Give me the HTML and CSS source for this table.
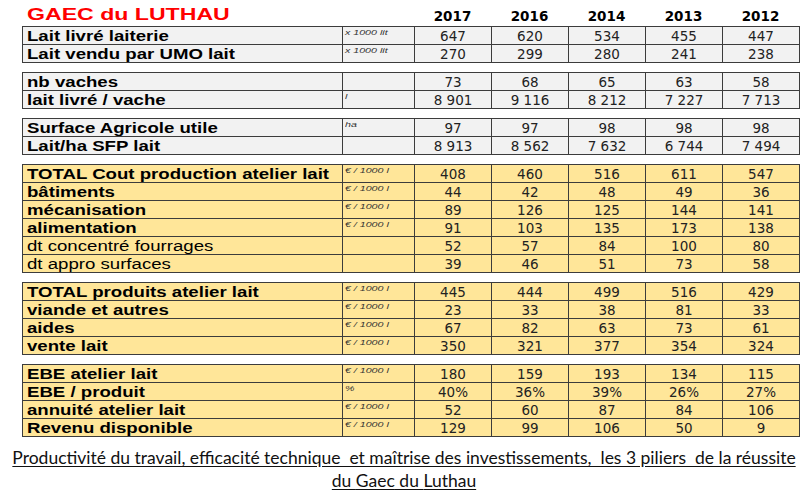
FILE: index.html
```html
<!DOCTYPE html>
<html lang="fr">
<head>
<meta charset="utf-8">
<title>GAEC du LUTHAU</title>
<link rel="stylesheet" href="styles.css">
</head>
<body>
<div class="page">
  <div class="head">
    <div class="title"><span class="sx">GAEC du LUTHAU</span></div>
    <div></div>
    <div class="yr">2017</div>
    <div class="yr">2016</div>
    <div class="yr">2014</div>
    <div class="yr">2013</div>
    <div class="yr">2012</div>
  </div>

  <table class="grp gray">
    <colgroup><col class="c-label"><col class="c-unit"><col class="c-num" span="5"></colgroup>
    <tr><th><span class="sx">Lait livré laiterie</span></th><td class="unit"><span class="sx">x 1000 lit</span></td><td>647</td><td>620</td><td>534</td><td>455</td><td>447</td></tr>
    <tr><th><span class="sx">Lait vendu par UMO lait</span></th><td class="unit"><span class="sx">x 1000 lit</span></td><td>270</td><td>299</td><td>280</td><td>241</td><td>238</td></tr>
  </table>

  <table class="grp gray">
    <colgroup><col class="c-label"><col class="c-unit"><col class="c-num" span="5"></colgroup>
    <tr><th><span class="sx">nb vaches</span></th><td class="unit"></td><td>73</td><td>68</td><td>65</td><td>63</td><td>58</td></tr>
    <tr><th><span class="sx">lait livré / vache</span></th><td class="unit"><span class="sx">l</span></td><td>8 901</td><td>9 116</td><td>8 212</td><td>7 227</td><td>7 713</td></tr>
  </table>

  <table class="grp gray">
    <colgroup><col class="c-label"><col class="c-unit"><col class="c-num" span="5"></colgroup>
    <tr><th><span class="sx">Surface Agricole utile</span></th><td class="unit"><span class="sx">ha</span></td><td>97</td><td>97</td><td>98</td><td>98</td><td>98</td></tr>
    <tr><th><span class="sx">Lait/ha SFP lait</span></th><td class="unit"></td><td>8 913</td><td>8 562</td><td>7 632</td><td>6 744</td><td>7 494</td></tr>
  </table>

  <table class="grp gold">
    <colgroup><col class="c-label"><col class="c-unit"><col class="c-num" span="5"></colgroup>
    <tr><th><span class="sx">TOTAL Cout production atelier lait</span></th><td class="unit"><span class="sx">€ / 1000 l</span></td><td>408</td><td>460</td><td>516</td><td>611</td><td>547</td></tr>
    <tr><th><span class="sx">bâtiments</span></th><td class="unit"><span class="sx">€ / 1000 l</span></td><td>44</td><td>42</td><td>48</td><td>49</td><td>36</td></tr>
    <tr><th><span class="sx">mécanisation</span></th><td class="unit"><span class="sx">€ / 1000 l</span></td><td>89</td><td>126</td><td>125</td><td>144</td><td>141</td></tr>
    <tr><th><span class="sx">alimentation</span></th><td class="unit"><span class="sx">€ / 1000 l</span></td><td>91</td><td>103</td><td>135</td><td>173</td><td>138</td></tr>
    <tr><th class="reg"><span class="sx">dt concentré fourrages</span></th><td class="unit"></td><td>52</td><td>57</td><td>84</td><td>100</td><td>80</td></tr>
    <tr><th class="reg"><span class="sx">dt appro surfaces</span></th><td class="unit"></td><td>39</td><td>46</td><td>51</td><td>73</td><td>58</td></tr>
  </table>

  <table class="grp gold">
    <colgroup><col class="c-label"><col class="c-unit"><col class="c-num" span="5"></colgroup>
    <tr><th><span class="sx">TOTAL produits atelier lait</span></th><td class="unit"><span class="sx">€ / 1000 l</span></td><td>445</td><td>444</td><td>499</td><td>516</td><td>429</td></tr>
    <tr><th><span class="sx">viande et autres</span></th><td class="unit"><span class="sx">€ / 1000 l</span></td><td>23</td><td>33</td><td>38</td><td>81</td><td>33</td></tr>
    <tr><th><span class="sx">aides</span></th><td class="unit"><span class="sx">€ / 1000 l</span></td><td>67</td><td>82</td><td>63</td><td>73</td><td>61</td></tr>
    <tr><th><span class="sx">vente lait</span></th><td class="unit"><span class="sx">€ / 1000 l</span></td><td>350</td><td>321</td><td>377</td><td>354</td><td>324</td></tr>
  </table>

  <table class="grp gold">
    <colgroup><col class="c-label"><col class="c-unit"><col class="c-num" span="5"></colgroup>
    <tr><th><span class="sx">EBE atelier lait</span></th><td class="unit"><span class="sx">€ / 1000 l</span></td><td>180</td><td>159</td><td>193</td><td>134</td><td>115</td></tr>
    <tr><th><span class="sx">EBE / produit</span></th><td class="unit"><span class="sx">%</span></td><td>40%</td><td>36%</td><td>39%</td><td>26%</td><td>27%</td></tr>
    <tr><th><span class="sx">annuité atelier lait</span></th><td class="unit"><span class="sx">€ / 1000 l</span></td><td>52</td><td>60</td><td>87</td><td>84</td><td>106</td></tr>
    <tr><th><span class="sx">Revenu disponible</span></th><td class="unit"><span class="sx">€ / 1000 l</span></td><td>129</td><td>99</td><td>106</td><td>50</td><td>9</td></tr>
  </table>
</div>

<p class="caption">Productivité du travail, efficacité technique  et maîtrise des investissements,  les 3 piliers  de la réussite<br>du <span class="spell">Gaec</span> du <span class="spell">Luthau</span></p>
</body>
</html>
```

FILE: styles.css
```css
* { box-sizing: border-box; }

body {
  margin: 0;
  background: #ffffff;
  font-family: "Liberation Sans", Arial, sans-serif;
  color: #000000;
}

.page {
  padding-left: 22px;
  width: 799px;
}

.sx {
  display: inline-block;
  transform: scaleX(1.33);
  transform-origin: left center;
  white-space: nowrap;
}

.head {
  display: grid;
  grid-template-columns: 320px 72px repeat(5, 77px);
  height: 26px;
  align-items: end;
}

.title {
  color: #ff0000;
  font-weight: bold;
  font-size: 16.5px;
  line-height: 20px;
  padding-left: 5px;
  align-self: start;
  padding-top: 4px;
}

.title .sx { transform: scaleX(1.4); }

.yr {
  font-family: "DejaVu Sans", Verdana, sans-serif;
  font-weight: bold;
  font-size: 13.5px;
  line-height: 14px;
  text-align: center;
  padding-bottom: 3px;
}

.grp {
  border-collapse: collapse;
  table-layout: fixed;
  width: 777px;
  margin-bottom: 9px;
  border: 1px solid #3c3c3c;
}

.c-label { width: 320px; }
.c-unit { width: 72px; }
.c-num { width: 77px; }

.grp th,
.grp td {
  border: 1px solid #3c3c3c;
  height: 18px;
  padding: 0;
}

.gray th, .gray td { background: #f2f2f2; }
.gold th, .gold td { background: #ffe699; }

.grp th {
  text-align: left;
  font-weight: bold;
  font-size: 14px;
  line-height: 16px;
  padding-left: 4px;
}

.grp th.reg { font-weight: normal; }

.grp td {
  text-align: center;
  font-family: "DejaVu Sans", Verdana, sans-serif;
  font-size: 13.5px;
  line-height: 16px;
  color: #222222;
}

.grp td.unit {
  text-align: left;
  vertical-align: top;
  font-family: "Liberation Sans", Arial, sans-serif;
  font-style: italic;
  font-size: 8px;
  line-height: 9px;
  padding: 1px 0 0 2px;
  color: #333333;
}

.caption {
  margin: 0;
  font-family: Lato, "Open Sans", sans-serif;
  font-size: 17.5px;
  line-height: 23px;
  text-align: center;
  text-decoration: underline;
  text-underline-offset: 2px;
  white-space: pre-wrap;
  color: #111111;
  width: 808px;
}

.spell {
  text-decoration: underline wavy #e03030;
  text-underline-offset: 5px;
  text-decoration-thickness: 1px;
}
```
